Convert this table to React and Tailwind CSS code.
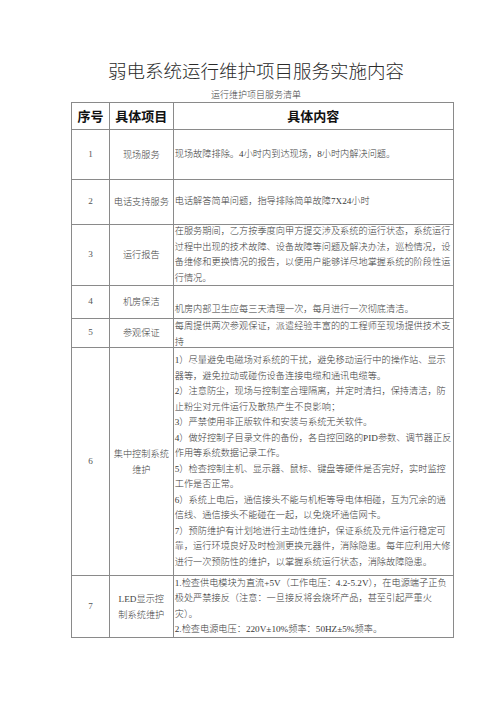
import React from "react";

const rows = [
  {
    no: "1",
    name: ["现场服务"],
    h: "h-[50px]",
    align: "items-center",
    lines: ["现场故障排除。4小时内到达现场，8小时内解决问题。"],
  },
  {
    no: "2",
    name: ["电话支持服务"],
    h: "h-[45px]",
    align: "items-center",
    lines: ["电话解答简单问题，指导排除简单故障7X24小时"],
  },
  {
    no: "3",
    name: ["运行报告"],
    h: "h-[61px]",
    align: "items-center",
    lines: [
      "在服务期间，乙方按季度向甲方提交涉及系统的运行状态，系统运行",
      "过程中出现的技术故障、设备故障等问题及解决办法，巡检情况，设",
      "备维修和更换情况的报告，以便用户能够详尽地掌握系统的阶段性运",
      "行情况。",
    ],
  },
  {
    no: "4",
    name: ["机房保洁"],
    h: "h-[33px]",
    align: "items-end pb-[1px]",
    lines: ["机房内部卫生应每三天清理一次，每月进行一次彻底清洁。"],
  },
  {
    no: "5",
    name: ["参观保证"],
    h: "h-[29px]",
    align: "items-start",
    lines: [
      "每周提供两次参观保证，派遣经验丰富的的工程师至现场提供技术支",
      "持",
    ],
  },
  {
    no: "6",
    name: ["集中控制系统", "维护"],
    h: "h-[228px]",
    align: "items-center",
    lines: [
      "1）尽量避免电磁场对系统的干扰，避免移动运行中的操作站、显示",
      "器等，避免拉动或碰伤设备连接电缆和通讯电缆等。",
      "2）注意防尘，现场与控制室合理隔离，并定时清扫，保持清洁，防",
      "止粉尘对元件运行及散热产生不良影响；",
      "3）严禁使用非正版软件和安装与系统无关软件。",
      "4）做好控制子目录文件的备份，各自控回路的PID参数、调节器正反",
      "作用等系统数据记录工作。",
      "5）检查控制主机、显示器、鼠标、键盘等硬件是否完好，实时监控",
      "工作是否正常。",
      "6）系统上电后，通信接头不能与机柜等导电体相碰，互为冗余的通",
      "信线、通信接头不能碰在一起，以免烧坏通信网卡。",
      "7）预防维护有计划地进行主动性维护，保证系统及元件运行稳定可",
      "靠，运行环境良好及时检测更换元器件，消除隐患。每年应利用大修",
      "进行一次预防性的维护，以掌握系统运行状态，消除故障隐患。",
    ],
  },
  {
    no: "7",
    name: ["LED显示控", "制系统维护"],
    h: "h-[62px]",
    align: "items-center",
    lines: [
      "1.检查供电模块为直流+5V（工作电压：4.2-5.2V），在电源端子正负",
      "极处严禁接反（注意：一旦接反将会烧坏产品，甚至引起严重火",
      "灾）。",
      "2.检查电源电压：220V±10%频率：50HZ±5%频率。",
    ],
  },
];

const serif = "font-['Liberation_Serif','Noto_Sans_CJK_SC',serif]";

const App = () => {
  return (
    <div className={`w-[500px] h-[707px] bg-white text-[#333] ${serif}`}>
      <h1 className="pt-[60px] pl-[12px] text-center text-[18.5px] leading-[24px] font-light text-[#2a2a2a]">
        弱电系统运行维护项目服务实施内容
      </h1>
      <p className="mt-[5px] pl-[12px] text-center text-[9px] leading-[12px] font-light text-[#444]">
        运行维护项目服务清单
      </p>

      <div className="mt-[1px] ml-[71px] w-[383px] border-l border-t border-[#8a8a8a]">
        <div className="flex h-[27px] border-b border-[#8a8a8a] font-['Noto_Sans_CJK_SC',sans-serif] text-[13px] font-semibold text-[#111]">
          <div className="w-[38px] border-r border-[#8a8a8a] flex items-center justify-center">
            序号
          </div>
          <div className="w-[64px] border-r border-[#8a8a8a] flex items-center justify-center">
            具体项目
          </div>
          <div className="w-[281px] border-r border-[#8a8a8a] flex items-center justify-center">
            具体内容
          </div>
        </div>

        {rows.map((r) => (
          <div
            key={r.no}
            className={`flex ${r.h} border-b border-[#8a8a8a] text-[9.2px] font-light`}
          >
            <div className="w-[38px] border-r border-[#8a8a8a] flex items-center justify-center text-[#555]">
              {r.no}
            </div>
            <div className="w-[64px] border-r border-[#8a8a8a] flex flex-col items-center justify-center leading-[16px] text-[#444]">
              {r.name.map((n) => (
                <span key={n} className="whitespace-nowrap">
                  {n}
                </span>
              ))}
            </div>
            <div
              className={`w-[281px] border-r border-[#8a8a8a] flex ${r.align} pl-[1px] overflow-hidden`}
            >
              <div className="leading-[15.5px] text-[#3a3a3a]">
                {r.lines.map((l, i) => (
                  <div key={i} className="whitespace-nowrap">
                    {l}
                  </div>
                ))}
              </div>
            </div>
          </div>
        ))}
      </div>
    </div>
  );
};

export default App;
